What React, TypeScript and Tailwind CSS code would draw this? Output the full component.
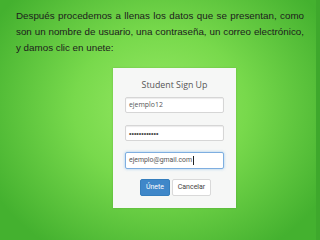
import React from "react";

export default function App() {
  return (
    <div className="relative w-[320px] h-[240px] overflow-hidden bg-[radial-gradient(ellipse_60%_70%_at_50%_45%,#97e964_0%,#78d94c_45%,#44b12f_100%)] flex flex-col">
      <p className="px-[16px] pt-[8px] text-[9.8px] leading-[16px] text-[#1c1c1c] text-justify font-['Liberation_Sans',Arial,sans-serif]">
        Después procedemos a llenas los datos que se presentan, como son un nombre de usuario, una contraseña, un correo electrónico, y damos clic en unete:
      </p>
      <div className="ml-[113px] mt-[12px] w-[123px] h-[140px] bg-[#f6f7f6] shadow-[0_0_2px_rgba(0,0,0,0.15)] flex flex-col items-center pt-[10px] px-[12px]">
        <div className="text-[8.8px] leading-[14px] text-[#555] font-['Open_Sans',sans-serif]">Student Sign Up</div>
        <div className="mt-[5px] w-full h-[16px] bg-white border border-[#d6d6d6] rounded-[2px] shadow-[inset_0_1px_1px_rgba(0,0,0,0.08)] flex items-center px-[3px] text-[6.9px] text-[#555] font-['Open_Sans',sans-serif]">
          ejemplo12
        </div>
        <div className="mt-[12px] w-full h-[16px] bg-white border border-[#d6d6d6] rounded-[2px] shadow-[inset_0_1px_1px_rgba(0,0,0,0.08)] flex items-center px-[3px] text-[7px] leading-none tracking-[0px] text-[#444] font-['Liberation_Sans',sans-serif]">
          ••••••••••••
        </div>
        <div className="mt-[11px] w-full h-[17px] bg-white border border-[#7eaee0] rounded-[2px] shadow-[0_0_3px_rgba(102,175,233,0.6)] flex items-center px-[3px] text-[6.9px] text-[#555] font-['Roboto',sans-serif]">
          ejemplo@gmail.com<span className="inline-block w-[1px] h-[9px] bg-[#222] ml-[0.5px]" />
        </div>
        <div className="mt-[10px] flex gap-[2px] ml-[2px]">
          <div className="w-[30px] h-[17px] bg-[#3f87c9] border border-[#357ebd] rounded-[2px] flex items-center justify-center text-white text-[7px] font-['Roboto',sans-serif]">
            Únete
          </div>
          <div className="w-[39px] h-[17px] bg-white border border-[#d9d9d9] rounded-[2px] flex items-center justify-center text-[#444] text-[7px] font-['Roboto',sans-serif]">
            Cancelar
          </div>
        </div>
      </div>
      <div className="absolute right-0 top-0 w-[4px] h-full bg-[#3ea82c]" />
    </div>
  );
}
